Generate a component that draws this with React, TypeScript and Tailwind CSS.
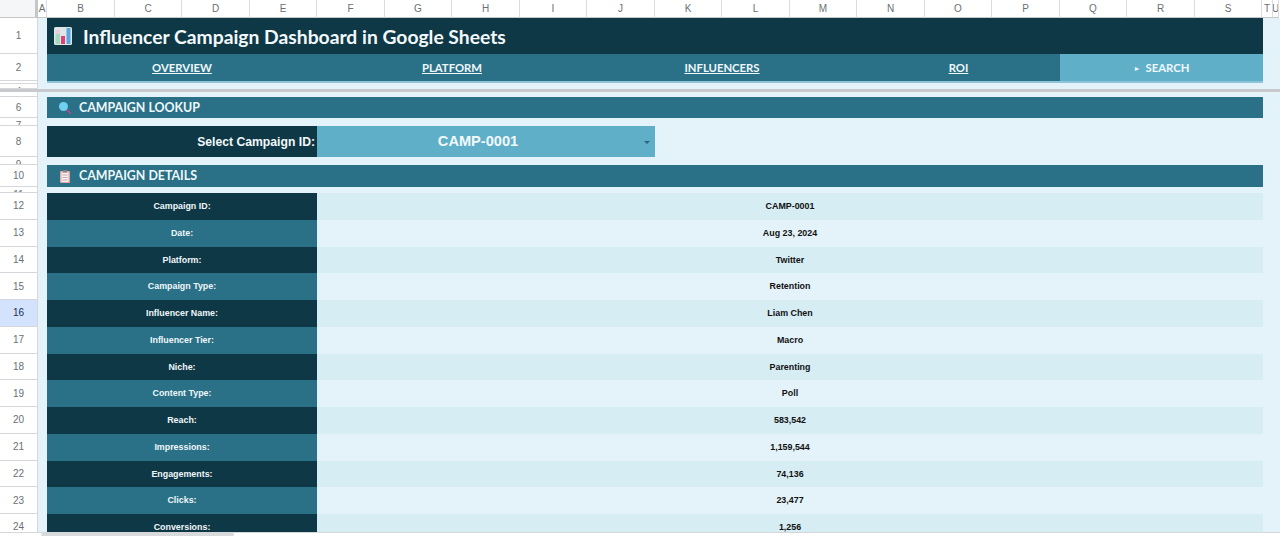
const columns = [
  { name: 'A', width: 'w-[9px]' },
  { name: 'B', width: 'w-[68px]' },
  { name: 'C', width: 'w-[67px]' },
  { name: 'D', width: 'w-[68px]' },
  { name: 'E', width: 'w-[67px]' },
  { name: 'F', width: 'w-[68px]' },
  { name: 'G', width: 'w-[67px]' },
  { name: 'H', width: 'w-[68px]' },
  { name: 'I', width: 'w-[67px]' },
  { name: 'J', width: 'w-[68px]' },
  { name: 'K', width: 'w-[67px]' },
  { name: 'L', width: 'w-[68px]' },
  { name: 'M', width: 'w-[67px]' },
  { name: 'N', width: 'w-[68px]' },
  { name: 'O', width: 'w-[67px]' },
  { name: 'P', width: 'w-[68px]' },
  { name: 'Q', width: 'w-[67px]' },
  { name: 'R', width: 'w-[68px]' },
  { name: 'S', width: 'w-[67px]' },
  { name: 'T', width: 'w-[11px]' },
  { name: 'U', width: 'w-[6px]' },
]

const details = [
  { num: '12', label: 'Campaign ID:', value: 'CAMP-0001' },
  { num: '13', label: 'Date:', value: 'Aug 23, 2024' },
  { num: '14', label: 'Platform:', value: 'Twitter' },
  { num: '15', label: 'Campaign Type:', value: 'Retention' },
  { num: '16', label: 'Influencer Name:', value: 'Liam Chen', active: true },
  { num: '17', label: 'Influencer Tier:', value: 'Macro' },
  { num: '18', label: 'Niche:', value: 'Parenting' },
  { num: '19', label: 'Content Type:', value: 'Poll' },
  { num: '20', label: 'Reach:', value: '583,542' },
  { num: '21', label: 'Impressions:', value: '1,159,544' },
  { num: '22', label: 'Engagements:', value: '74,136' },
  { num: '23', label: 'Clicks:', value: '23,477' },
  { num: '24', label: 'Conversions:', value: '1,256' },
]

function RowNum({ num, height, active, clipped }: { num: string; height: string; active?: boolean; clipped?: boolean }) {
  return (
    <div
      className={`${height} ${active ? 'bg-[#d3e3fd] text-[#1c2b50]' : 'bg-white text-[#6b6f73]'} ${clipped ? 'items-start pt-[3px] leading-[10px]' : 'items-center'} flex w-[38px] shrink-0 justify-center overflow-hidden border-r border-b border-[#d5d7da] text-[10px]`}
    >
      {num}
    </div>
  )
}

function SectionBar({ title, icon, offset }: { title: string; icon: React.ReactNode; offset?: boolean }) {
  return (
    <div className="flex h-full w-[1216px] items-center bg-[#2a7086] font-['Lato',sans-serif] text-[12.4px] font-bold text-[#eef8fb]">
      <span className="flex w-[32px] justify-center pl-[4px]">{icon}</span>
      <span className={offset ? 'pt-[1px]' : ''}>{title}</span>
    </div>
  )
}

function ChartIcon() {
  return (
    <svg width="20" height="20" viewBox="0 0 20 20">
      <rect x="1" y="1" width="18" height="18" rx="1.5" fill="#dfe6e6" />
      <rect x="2.5" y="4" width="4.5" height="4" fill="#e9cfdc" />
      <rect x="2.5" y="8" width="4.5" height="10" fill="#a3dcbc" />
      <rect x="8" y="10" width="4" height="8" fill="#e0407a" />
      <rect x="13.5" y="2" width="4" height="16" fill="#5aa8e0" />
    </svg>
  )
}

function SearchIcon() {
  return (
    <svg width="14" height="14" viewBox="0 0 14 14">
      <line x1="7.5" y1="8" x2="12.5" y2="12" stroke="#a0508a" strokeWidth="2" strokeLinecap="round" />
      <circle cx="5.5" cy="5.5" r="4.5" fill="#6fd0f0" />
    </svg>
  )
}

function ClipboardIcon() {
  return (
    <svg width="10" height="13" viewBox="0 0 10 13">
      <rect x="0" y="1" width="10" height="12" rx="1" fill="#e3a9a4" />
      <rect x="1.5" y="2.5" width="7" height="9.5" fill="#f6f0f0" />
      <rect x="3" y="0" width="4" height="2.5" fill="#8d7f8c" />
      <rect x="2.5" y="4.5" width="5" height="1" fill="#c2aab4" />
      <rect x="2.5" y="7" width="5" height="1" fill="#c2aab4" />
      <rect x="2.5" y="9.5" width="5" height="1" fill="#c2aab4" />
    </svg>
  )
}

export default function App() {
  return (
    <div className="relative flex h-[536px] w-[1280px] flex-col overflow-hidden bg-[#e4f3f9] font-['Liberation_Sans',Arial,sans-serif]">
      {/* column letters */}
      <div className="flex h-[18px] shrink-0 bg-white">
        <div className="w-[38px] shrink-0 border-r-[3px] border-b border-r-[#c4c7c5] border-b-[#c4c7c5] bg-[#f5f6f7]" />
        {columns.map((col) => (
          <div
            key={col.name}
            className={`${col.width} flex shrink-0 items-center justify-center overflow-hidden border-r border-b border-r-[#dadce0] border-b-[#c4c7c5] text-[10px] text-[#6b6f73]`}
          >
            {col.name}
          </div>
        ))}
      </div>

      <div className="flex h-[36px] shrink-0">
        <RowNum num="1" height="h-[36px]" />
        <div className="w-[9px] shrink-0" />
        <div className="flex w-[1216px] items-center bg-[#0f3846] font-['Lato',sans-serif] text-[19.3px] font-bold text-[#f3f9fb]">
          <span className="ml-[6px] mr-[10px] flex w-[20px] justify-center"><ChartIcon /></span>
          <span className="pt-[2px]">Influencer Campaign Dashboard in Google Sheets</span>
        </div>
      </div>

      <div className="flex h-[27px] shrink-0">
        <RowNum num="2" height="h-[27px]" />
        <div className="w-[9px] shrink-0" />
        <div className="grid w-[1216px] grid-cols-[270px_270px_270px_203px_203px] bg-[#2a7086] font-['Lato',sans-serif] text-[11.3px] font-bold text-[#eef8fb]">
          <a className="flex items-center justify-center pt-[2px] underline">OVERVIEW</a>
          <a className="flex items-center justify-center pt-[2px] underline">PLATFORM</a>
          <a className="flex items-center justify-center pt-[2px] underline">INFLUENCERS</a>
          <a className="flex items-center justify-center pt-[2px] underline">ROI</a>
          <a className="flex items-center justify-center gap-[5px] bg-[#5fafc9] pt-[2px]"><span className="text-[7px]">►</span>SEARCH</a>
        </div>
      </div>

      {/* hidden rows and the freeze line */}
      <div className="flex h-[3px] shrink-0">
        <RowNum num="" height="h-[3px]" />
        <div className="w-[9px] shrink-0" />
        <div className="h-[2px] w-[1216px] bg-[#8cc5da]" />
      </div>
      <div className="flex h-[5px] shrink-0">
        <RowNum num="4" height="h-[5px]" clipped />
      </div>
      <div className="h-[3px] shrink-0 bg-[#c7c9cc]" />
      <div className="flex h-[5px] shrink-0">
        <RowNum num="" height="h-[5px]" />
      </div>

      <div className="flex h-[21px] shrink-0">
        <RowNum num="6" height="h-[21px]" />
        <div className="w-[9px] shrink-0" />
        <SectionBar title="CAMPAIGN LOOKUP" icon={<SearchIcon />} offset />
      </div>

      <div className="flex h-[8px] shrink-0">
        <RowNum num="7" height="h-[8px]" clipped />
      </div>

      <div className="flex h-[31px] shrink-0">
        <RowNum num="8" height="h-[31px]" />
        <div className="w-[9px] shrink-0" />
        <div className="flex w-[270px] items-center justify-end bg-[#0f3846] pr-[2px] pt-[1px] text-[12.2px] font-bold text-[#f3f9fb]">
          Select Campaign ID:
        </div>
        <div className="relative flex w-[338px] items-center justify-center bg-[#5fafc9] pr-[16px] pt-[1px] text-[14.6px] font-bold text-[#f3f9fb]">
          CAMP-0001
          <span className="absolute right-[5px] top-[15px] h-0 w-0 border-x-[3px] border-t-[3px] border-x-transparent border-t-[#2a6478]" />
        </div>
      </div>

      <div className="flex h-[8px] shrink-0">
        <RowNum num="9" height="h-[8px]" clipped />
      </div>

      <div className="flex h-[22px] shrink-0">
        <RowNum num="10" height="h-[22px]" />
        <div className="w-[9px] shrink-0" />
        <SectionBar title="CAMPAIGN DETAILS" icon={<ClipboardIcon />} />
      </div>

      <div className="flex h-[6px] shrink-0">
        <RowNum num="11" height="h-[6px]" clipped />
      </div>

      {details.map((row, i) => (
        <div key={row.num} className="flex h-[26.75px] shrink-0">
          <RowNum num={row.num} height="h-[26.75px]" active={row.active} />
          <div className="w-[9px] shrink-0" />
          <div
            className={`${i % 2 === 0 ? 'bg-[#0f3846]' : 'bg-[#2a7086]'} flex w-[270px] items-center justify-center pt-[1px] text-[8.9px] font-bold text-[#f0f7fa]`}
          >
            {row.label}
          </div>
          <div
            className={`${i % 2 === 0 ? 'bg-[#d6edf4]' : 'bg-[#e4f3f9]'} flex w-[946px] items-center justify-center pt-[1px] text-[8.9px] font-bold text-[#111111]`}
          >
            {row.value}
          </div>
        </div>
      ))}

      {/* sheet scrollbar */}
      <div className="absolute bottom-0 left-0 flex h-[4px] w-[1280px] border-t border-[#d5d7da] bg-white">
        <div className="ml-[41px] h-[3px] w-[193px] rounded-[2px] bg-[#d8dadc]" />
      </div>
    </div>
  )
}
